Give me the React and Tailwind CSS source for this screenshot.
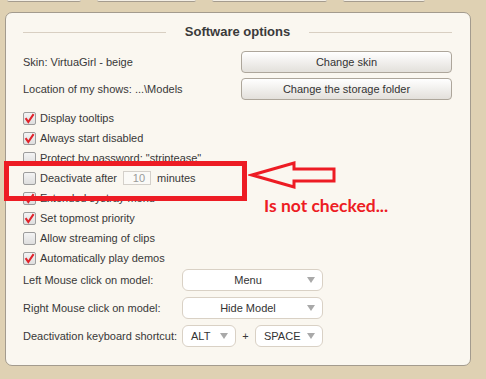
const font = { fontFamily: '"Liberation Sans", Arial, sans-serif' };

function Check({ checked }) {
  return (
    <span className="w-[13px] h-[13px] shrink-0 rounded-[2px] border border-[#9d9d9d] bg-gradient-to-b from-[#f4f4f4] to-[#dedede] flex items-center justify-center">
      {checked && (
        <svg width="11" height="11" viewBox="0 0 11 11">
          <path d="M1.6 5.2 L4.3 9 L9.6 1.2" fill="none" stroke="#e0222a" strokeWidth="2.1" strokeLinejoin="miter" />
        </svg>
      )}
    </span>
  );
}

function CheckRow({ checked, children }) {
  return (
    <div className="h-[20px] flex items-center">
      <Check checked={checked} />
      <span className="ml-[4px] flex items-center">{children}</span>
    </div>
  );
}

function Select({ value, width, textPad }) {
  return (
    <div
      className={`h-[22px] ${width} rounded-[6px] border border-[#d9d1c5] bg-white flex items-center`}
    >
      <span className={`flex-1 ${textPad} text-[#333]`}>{value}</span>
      <svg width="8" height="6" viewBox="0 0 8 6" className="mr-[7px]">
        <path d="M0 0 H8 L4 6 Z" fill="#a9a9a9" />
      </svg>
    </div>
  );
}

function Button({ children }) {
  return (
    <div className="w-[211px] h-[22px] rounded-[4px] border border-[#ada69b] bg-gradient-to-b from-white to-[#e3e0db] flex items-center justify-center text-[#333]">
      {children}
    </div>
  );
}

export default function App() {
  return (
    <div className="relative w-[486px] h-[379px] overflow-hidden bg-[#dfd1b3] text-[11px] text-[#383838]" style={font}>
      <div className="flex h-[2px]">
        <div className="ml-[7px] w-[74px] h-[2px] rounded-b-[3px] border-b border-[#a59c8e] bg-[#f3eee4]" />
        <div className="ml-[16px] w-[99px] h-[2px] rounded-b-[3px] border-b border-[#a59c8e] bg-[#f3eee4]" />
        <div className="ml-[16px] w-[115px] h-[2px] rounded-b-[3px] border-b border-[#a59c8e] bg-[#f3eee4]" />
        <div className="ml-[16px] w-[82px] h-[2px] rounded-b-[3px] border-b border-[#a59c8e] bg-[#f3eee4]" />
      </div>

      <div className="mt-[10px] ml-[5px] w-[466px] h-[354px] rounded-[7px] border border-[#a39b8e] bg-[#faf7f0] pt-[11px] pl-[17px] pr-[18px]">
        <div className="h-[16px] flex items-center gap-[19px]">
          <div className="flex-1 h-px bg-[#d8cfc2]" />
          <span className="text-[13px] font-bold text-[#3a3a3a]">Software options</span>
          <div className="flex-1 h-px bg-[#d8cfc2]" />
        </div>

        <div className="mt-[11px] h-[22px] flex items-center justify-between">
          <span>Skin: VirtuaGirl - beige</span>
          <Button>Change skin</Button>
        </div>
        <div className="mt-[5px] h-[22px] flex items-center justify-between">
          <span>Location of my shows: ...\Models</span>
          <Button>Change the storage folder</Button>
        </div>

        <div className="mt-[8px]">
          <CheckRow checked>Display tooltips</CheckRow>
          <CheckRow checked>Always start disabled</CheckRow>
          <CheckRow>Protect by password: "striptease"</CheckRow>
          <CheckRow>
            Deactivate after
            <span className="ml-[6px] w-[28px] h-[14px] border border-[#d4d0ca] bg-[#fbfaf7] flex items-center justify-end pr-[5px] text-[#9a9a9a]">
              10
            </span>
            <span className="ml-[6px]">minutes</span>
          </CheckRow>
          <CheckRow checked>Extended systray menu</CheckRow>
          <CheckRow checked>Set topmost priority</CheckRow>
          <CheckRow>Allow streaming of clips</CheckRow>
          <CheckRow checked>Automatically play demos</CheckRow>
        </div>

        <div className="mt-[1px] h-[22px] flex items-center">
          <span className="w-[159px]">Left Mouse click on model:</span>
          <Select value="Menu" width="w-[141px]" textPad="text-center pl-[6px]" />
        </div>
        <div className="mt-[6px] h-[22px] flex items-center">
          <span className="w-[159px]">Right Mouse click on model:</span>
          <Select value="Hide Model" width="w-[141px]" textPad="text-center pl-[6px]" />
        </div>
        <div className="mt-[6px] h-[22px] flex items-center">
          <span className="w-[159px]">Deactivation keyboard shortcut:</span>
          <Select value="ALT" width="w-[54px]" textPad="pl-[8px]" />
          <span className="w-[19px] text-center">+</span>
          <Select value="SPACE" width="w-[68px]" textPad="pl-[8px]" />
        </div>
      </div>

      {/* annotation overlay */}
      <div className="absolute left-[4px] top-[161px] w-[243px] h-[40px] border-[5px] border-[#ed1c24]" />
      <svg className="absolute left-[248px] top-[158px]" width="92" height="32" viewBox="248 158 92 32">
        <path
          d="M252 175 L294 163 L294 169 L334 169 L334 181 L294 181 L294 187 Z"
          fill="none"
          stroke="#ed1c24"
          strokeWidth="3"
          strokeLinejoin="miter"
        />
      </svg>
      <div
        className="absolute left-[264px] top-[193px] text-[17.5px] font-bold text-[#ed1c24]"
        style={{ fontFamily: 'Lato, "Open Sans", sans-serif' }}
      >
        Is not checked...
      </div>
    </div>
  );
}
